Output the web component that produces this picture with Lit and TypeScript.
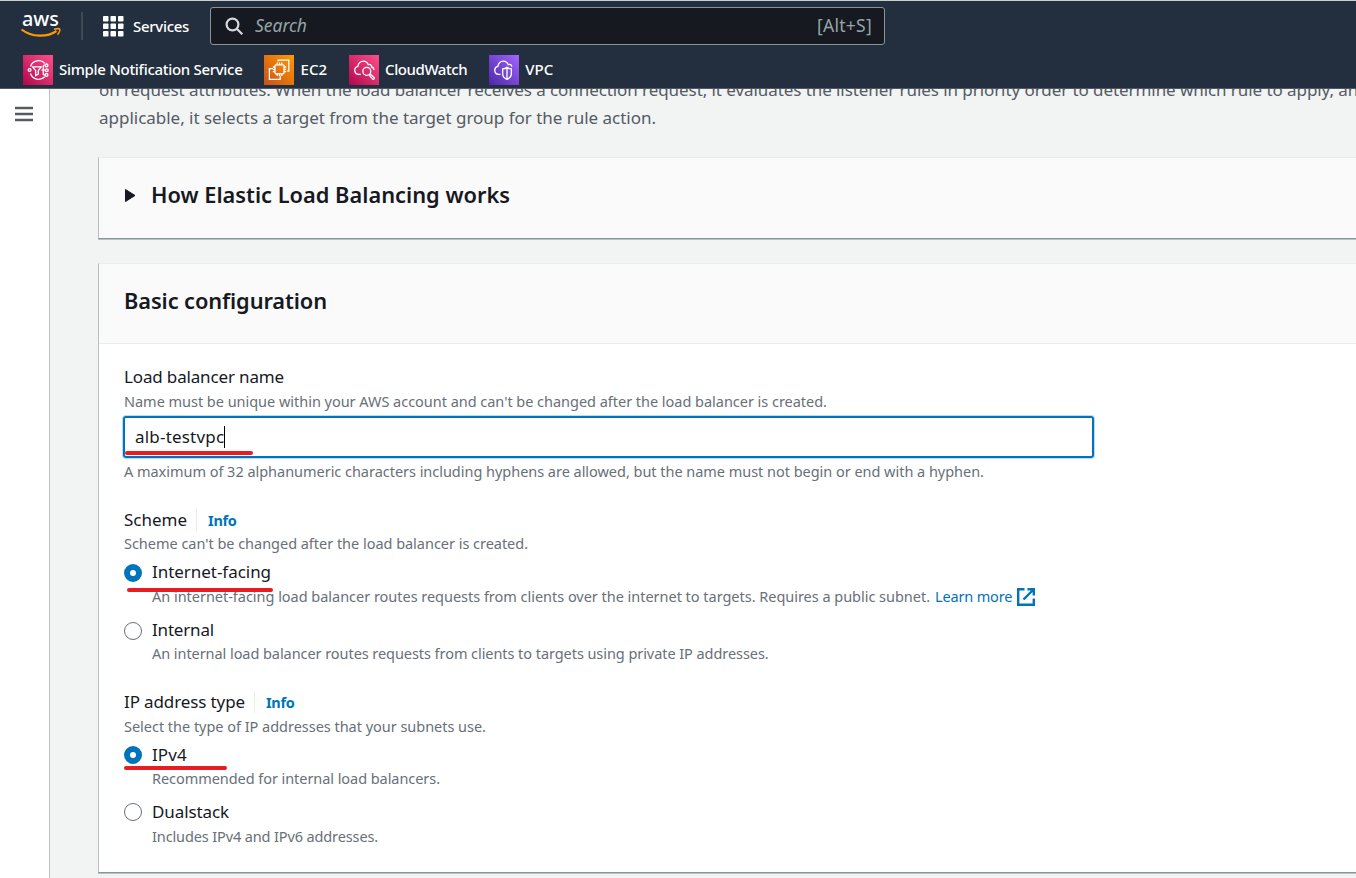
import { LitElement, html, css, svg } from "lit";
import { customElement } from "lit/decorators.js";

const t = (text: string, cls: string, spacing = 0) =>
  html`<span class="t ${cls}" style="letter-spacing:${spacing}px">${text}</span>`;

const strokes = {
  sns: svg`<path d="M21.800 8.300A8.600 8.600 0 0 0 7.500 11.500M7.500 18.500A8.600 8.600 0 0 0 21.800 21.700"/><path d="M9.600 11.800h8.600l-2.900 3.900v3.400l-2.600 1.500v-4.900z"/><circle cx="6.600" cy="15" r="1.400"/><path d="M18.500 15.200h3.600M20.300 10.400v9.500M20.300 10.400h1.800M20.300 19.900h1.800"/><circle cx="23.500" cy="10.400" r="1.400"/><circle cx="23.800" cy="15.200" r="1.400"/><circle cx="23.500" cy="19.900" r="1.400"/>`,
  ec2: svg`<rect x="11" y="9.800" width="9" height="9" rx="1"/><path d="M13.200 9.800V7.600M15.500 9.800V7.600M17.800 9.800V7.600M13.200 21v-2.200M15.500 21v-2.200M17.800 21v-2.200M8.800 12h2.200M8.800 14.300H11M8.800 16.600H11M20 12h2.200M20 14.300h2.200M20 16.600h2.200M14.200 6.600V5.200h10.600v11h-1.600M9 13.600H5.400v10.800h10.800v-3.600"/>`,
  cloudwatch: svg`<path d="M11.800 19.300H9.500a4 4 0 0 1-.6-7.900c.2-3.200 2.800-5.300 5.500-5.300 2.300 0 3.900 1.300 4.800 3.500 1.900-.8 3.300.3 3.400 2.300 1.600.5 2.300 1.500 2.300 3.100"/><circle cx="17.800" cy="16.300" r="4"/><path d="M20.200 20l3.200 3.900a1.100 1.100 0 0 0 1.700-1.400L21.300 19"/>`,
  vpc: svg`<path d="M11.500 19.300H9.500a4 4 0 0 1-.6-7.900c.2-3.200 2.800-5.300 5.500-5.300 2.300 0 3.900 1.300 4.800 3.500 1.900-.8 3.300.3 3.600 2"/><path d="M18 12.400c1.500 1 2.800 1.400 4.300 1.500v5.400c0 2.600-2 4-4.300 5.100-2.300-1.100-4.300-2.500-4.300-5.100v-5.400c1.500-.1 2.800-.5 4.300-1.500zM18 12.500v11.500"/>`,
};

const shortcuts = [
  { id: "sns", label: "Simple Notification Service", tr: -0.305 },
  { id: "ec2", label: "EC2", tr: 0.05 },
  { id: "cloudwatch", label: "CloudWatch", tr: -0.42 },
  { id: "vpc", label: "VPC", tr: 0.1 },
];

@customElement("app-root")
export class AppRoot extends LitElement {
  static styles = css`
    :host { display: block; width: 100%; height: 878px; overflow: hidden; position: relative;
      font-family: "Noto Sans", "Open Sans", sans-serif; color: #16191f; background: #f2f3f3; }
    * { box-sizing: border-box; }
    .t { white-space: nowrap; display: inline-block; }
    header { height: 89px; background: #232f3e; border-top: 1px solid #c9cfcf; border-bottom: 1px solid #505863; color: #fff; }
    .bar { display: flex; align-items: center; height: 50px; padding-left: 21px; }
    .logo { width: 40px; height: 34px; display: block; overflow: visible; }
    .logo text { font: 500 20px "Noto Sans", sans-serif; }
    .sep { width: 2px; height: 28px; background: #3f4955; margin: 0 20px; }
    .grid { width: 21px; height: 21px; margin-right: 9px; }
    .nav { font-size: 15px; font-weight: 500; line-height: 24px; }
    .search { margin-left: 21px; width: 675px; height: 38px; background: #16191f; border: 1px solid #879596; border-radius: 3px;
      display: flex; align-items: center; padding: 0 12px 0 14px; color: #95a5a6; }
    .search svg { width: 19px; height: 19px; margin-right: 11px; }
    .search .t { padding-bottom: 2px; }
    .ph { font-size: 17.5px; font-style: italic; flex: none; }
    .kbd { font-size: 17.5px; margin-left: auto; }
    .favs { display: flex; padding: 4px 0 0 23px; }
    .fav { display: flex; align-items: center; gap: 6px; margin-right: 22px; height: 30px; }
    .fav .t { padding-bottom: 2px; }
    .fav svg { width: 30px; height: 30px; fill: none; stroke: #fff; stroke-width: 1.3; }
    .sns, .cloudwatch { background: linear-gradient(45deg, #b0084d, #ff4f8b); }
    .ec2 { background: linear-gradient(45deg, #c8511b, #ff9900); }
    .vpc { background: linear-gradient(45deg, #4d27a8, #a166ff); }
    .page { display: flex; height: 789px; overflow: hidden; }
    aside { width: 50px; flex: none; background: #fff; border-right: 1px solid #b9c0c1; padding: 17px 0 0 15px; }
    aside svg { width: 18px; height: 16px; display: block; }
    main { flex: 1; min-width: 0; padding-left: 48px; overflow: hidden; }
    .intro { margin: -13px 0 26px 1px; color: #545b64; font-size: 17px; line-height: 27.5px; width: 1400px; }
    .intro div { height: 27.5px; }
    .card { background: #fff; border-left: 1px solid #b9c0c1; border-top: 1px solid #eaeded; border-bottom: 1px solid #879596; box-shadow: 0 1px 0 #b9c2c2; width: 1400px; }
    .works { height: 82px; background: #fafafa; display: flex; align-items: center; padding: 0 0 6px 26px; margin-bottom: 24px; }
    .works svg { width: 11px; height: 13px; margin-right: 15px; }
    .h { font-size: 21.8px; font-weight: 600; line-height: 30px; }
    .head { height: 80px; background: #fafafa; border-bottom: 1px solid #eaeded; padding: 22px 0 0 25px; }
    .basic { height: 610px; }
    .body { padding: 20px 0 0 25px; }
    .row { display: flex; height: 26px; align-items: center; position: relative; }
    .lab { font-size: 17px; line-height: 26px; }
    .hint { display: flex; height: 22px; align-items: center; position: relative; }
    .sm { font-size: 14.5px; line-height: 22px; color: #687078; }
    .inp { margin: 4px 0 2px -1px; width: 971px; height: 42px; border: 2px solid #0073bb; border-radius: 3px; box-shadow: 0 0 0 1px #b8dcf2; display: flex; align-items: center; padding-left: 10px; position: relative; }
    .caret { width: 1px; height: 22px; background: #000; }
    .group { margin-top: 25px; }
    .group > .hint { margin-top: -1px; }
    .info { font-size: 14.5px; font-weight: 700; color: #0073bb; line-height: 22px; border-left: 1px solid #eaeded; margin-left: 9px; padding-left: 11px; }
    .opt { margin-top: 5px; }
    .opt + .opt { margin-top: 10px; }
    .opt .hint { padding-left: 28px; }
    .opt + .opt .hint { margin-top: -1.5px; }
    .ip > .hint { margin-top: 0; }
    .ip .opt .hint { margin-top: -1px; }
    .ip .opt + .opt .hint { margin-top: .5px; }
    .dot { width: 18px; height: 18px; border-radius: 50%; border: 1px solid #687078; margin: 1px 10px 0 0; flex: none; }
    .dot.on { border: 6px solid #0073bb; }
    .link { color: #0073bb; margin-left: 5px; }
    .ext { width: 18px; height: 18px; margin: 1px 0 0 5px; }
    .mark { position: absolute; height: 4px; border-radius: 2px; background: #e81c23; z-index: 2; }
    .m1 { left: 0; top: 32.5px; width: 128px; }
    .m2 { left: 3px; top: 29px; width: 146px; }
    .m3 { left: 0; top: 24px; width: 103px; }
  `;

  option(label: string, ls: number, desc: string, ds: number, on: boolean, mark = "", link: unknown = "") {
    return html`<div class="opt">
      <div class="row"><span class="dot ${on ? "on" : ""}"></span>${t(label, "lab", ls)}${mark ? html`<i class="mark ${mark}"></i>` : ""}</div>
      <div class="hint">${t(desc, "sm", ds)}${link}</div>
    </div>`;
  }

  render() {
    return html`
      <header>
        <div class="bar">
          <svg class="logo" viewBox="0 0 40 34"><text x="1" y="17" fill="#fff" textLength="37" lengthAdjust="spacingAndGlyphs">aws</text>
            <path d="M.5 20.500C11 28.500 26 28.500 35.500 22" fill="none" stroke="#f90" stroke-width="2.200"/><path d="M33 20.300c3-.9 5.500-.6 5.800.1s-.5 3.600-2.400 5.400" fill="none" stroke="#f90" stroke-width="1.500"/></svg>
          <span class="sep"></span>
          <svg class="grid" viewBox="0 0 21 21" fill="#fff">${[0, 7.5, 15].map(y => [0, 7.5, 15].map(x => svg`<rect x=${x} y=${y} width="5.500" height="5.500" rx=".8"/>`))}</svg>
          ${t("Services", "nav", -0.3)}
          <div class="search">
            <svg viewBox="0 0 19 19" fill="none" stroke="#d5dbdb" stroke-width="2.200"><circle cx="7.500" cy="7.500" r="5.900"/><path d="M11.800 11.800l5.500 5.500"/></svg>
            ${t("Search", "ph", -0.05)}${t("[Alt+S]", "kbd", 0.27)}
          </div>
        </div>
        <div class="favs">${shortcuts.map(s => html`<div class="fav"><svg class=${s.id} viewBox="0 0 30 30">${strokes[s.id as keyof typeof strokes]}</svg>${t(s.label, "nav", s.tr)}</div>`)}</div>
      </header>
      <div class="page">
        <aside><svg viewBox="0 0 18 16" fill="none" stroke="#545b64" stroke-width="2.300"><path d="M0 2h18M0 8h18M0 14h18"/></svg></aside>
        <main>
          <div class="intro">
            <div>${t("on request attributes. When the load balancer receives a connection request, it evaluates the listener rules in priority order to determine which rule to apply, and if", "", -0.072)}</div>
            <div>${t("applicable, it selects a target from the target group for the rule action.", "", -0.018)}</div>
          </div>
          <section class="card works"><svg viewBox="0 0 11 13"><path d="M.5.5l9.500 6-9.500 6z" fill="#16191f" stroke="#16191f" stroke-linejoin="round"/></svg>${t("How Elastic Load Balancing works", "h", 0)}</section>
          <section class="card basic">
            <div class="head">${t("Basic configuration", "h", -0.1)}</div>
            <div class="body">
              <div class="row">${t("Load balancer name", "lab", -0.155)}</div>
              <div class="hint">${t("Name must be unique within your AWS account and can't be changed after the load balancer is created.", "sm", -0.027)}</div>
              <div class="inp">${t("alb-testvpc", "lab", 0.2)}<span class="caret"></span><i class="mark m1"></i></div>
              <div class="hint">${t("A maximum of 32 alphanumeric characters including hyphens are allowed, but the name must not begin or end with a hyphen.", "sm", -0.03)}</div>
              <div class="group">
                <div class="row">${t("Scheme", "lab")}${t("Info", "info", -0.3)}</div>
                <div class="hint">${t("Scheme can't be changed after the load balancer is created.", "sm", -0.027)}</div>
                ${this.option("Internet-facing", -0.04, "An internet-facing load balancer routes requests from clients over the internet to targets. Requires a public subnet.", -0.025, true, "m2",
                  html`${t("Learn more", "sm link", -0.16)}<svg class="ext" viewBox="0 0 18 18" fill="none" stroke="#0073bb" stroke-width="2.400"><path d="M7.500 1.200H1.200v15.600h15.600v-6.300M10.500 1.200h6.300v6.300M16.500 1.500L6.500 11.500"/></svg>`)}
                ${this.option("Internal", -0.18, "An internal load balancer routes requests from clients to targets using private IP addresses.", -0.062, false)}
              </div>
              <div class="group ip">
                <div class="row">${t("IP address type", "lab", -0.12)}${t("Info", "info", -0.3)}</div>
                <div class="hint">${t("Select the type of IP addresses that your subnets use.", "sm", -0.026)}</div>
                ${this.option("IPv4", 0.1, "Recommended for internal load balancers.", -0.06, true, "m3")}
                ${this.option("Dualstack", -0.1, "Includes IPv4 and IPv6 addresses.", -0.124, false)}
              </div>
            </div>
          </section>
        </main>
      </div>`;
  }
}
